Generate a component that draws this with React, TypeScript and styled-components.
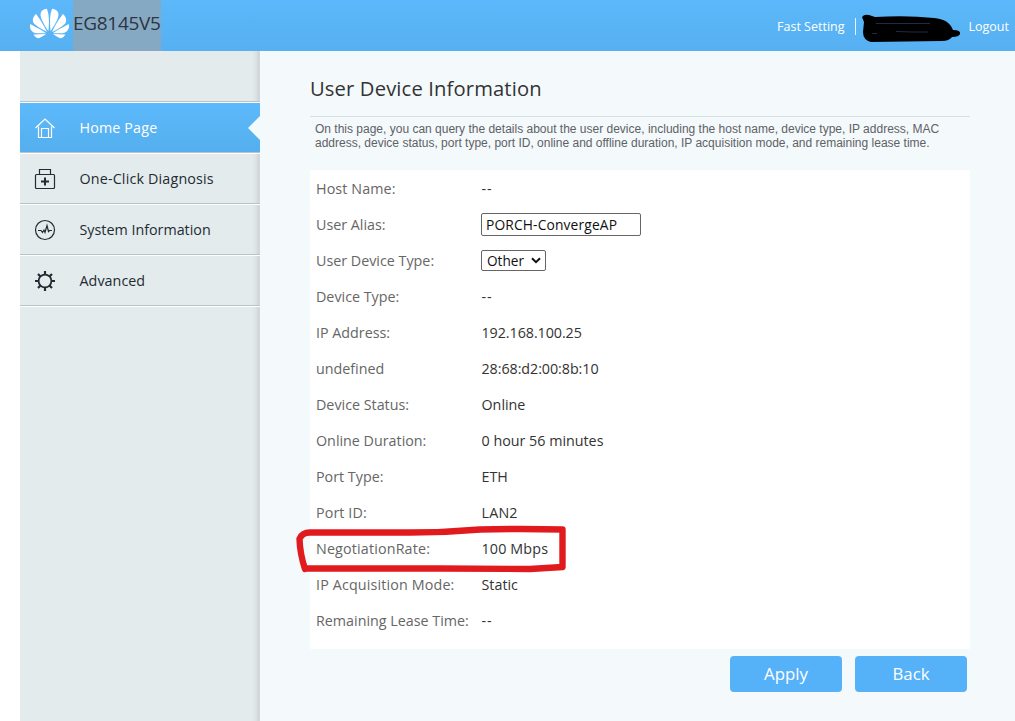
import React from "react";
import styled, { createGlobalStyle, css } from "styled-components";
import { SiHuawei } from "react-icons/si";

const Global = createGlobalStyle`
  * { box-sizing: border-box; }
  body {
    margin: 0;
    background: #fff;
    font-family: "Open Sans", "Noto Sans", sans-serif;
    font-size: 14.3px;
    color: #333;
    overflow: hidden;
  }
`;

const Page = styled.div`
  position: relative;
  display: flex;
  flex-direction: column;
  width: 1015px;
  height: 721px;
`;

const Header = styled.header`
  display: flex;
  justify-content: space-between;
  height: 51px;
  flex: none;
  padding: 0 6px 0 30px;
  background: linear-gradient(#5cb8fa, #56b0f1);
`;

const Brand = styled.div`
  display: flex;
  align-items: center;
  color: #fff;
`;

const Logo = styled(SiHuawei)`
  width: 39px;
  height: 39px;
  margin: 0 4px 4px 0;
`;

const Model = styled.span`
  width: 88px;
  height: 51px;
  line-height: 46px;
  font-size: 19px;
  letter-spacing: -0.3px;
  white-space: nowrap;
  color: #2d3540;
  background: #86a9c3;
`;

const TopLinks = styled.nav`
  display: flex;
  align-items: center;
  height: 53px;
  font-size: 12.5px;
  color: #fff;
`;

const TopLink = styled.a`
  white-space: nowrap;
`;

const Divider = styled.i`
  width: 1px;
  height: 17px;
  margin: 0 6px 0 10px;
  background: #e6f4fe;
`;

const Redaction = styled.svg`
  width: 99px;
  height: 29px;
  margin: 3px 8px 0 0;
`;

const Body = styled.div`
  display: flex;
  flex: 1;
  padding-left: 20px;
`;

const Sidebar = styled.aside`
  width: 240px;
  background: linear-gradient(90deg, #e4ebed 232px, #dce2e5 236px, #ced5d9 239px, #d6dde0 240px);
`;

const edge = css`
  border-bottom: 1px solid #b9c3c8;
  box-shadow: 0 1px 0 #fff;
  margin-bottom: 1px;
`;

const SidebarTop = styled.div`
  height: 51px;
  ${edge}
`;

const NavItem = styled.a<{ $active?: boolean }>`
  position: relative;
  display: flex;
  align-items: center;
  height: 50px;
  padding-left: 14px;
  gap: 23.5px;
  white-space: nowrap;
  color: ${(p) => (p.$active ? "#fff" : "#222b33")};
  background: ${(p) => (p.$active ? "linear-gradient(#5cb9fb, #55afee)" : "none")};
  ${edge}
`;

const NavIcon = styled.svg`
  width: 22px;
  height: 22px;
  fill: none;
  stroke: currentColor;
`;

const NavLabel = styled.span<{ $track: number }>`
  letter-spacing: ${(p) => p.$track}px;
`;

const Notch = styled.i`
  position: absolute;
  right: 0;
  top: 13px;
  border: 12px solid transparent;
  border-right-color: #f4f9fc;
  border-left: 0;
`;

const Main = styled.main`
  display: flex;
  flex-direction: column;
  flex: 1;
  padding: 0 45px 0 50px;
  background: #f4f9fc;
`;

const Title = styled.h1`
  height: 66px;
  margin: 0;
  padding-top: 11px;
  line-height: 53px;
  font-size: 20.2px;
  font-weight: 400;
  letter-spacing: 0.14px;
  border-bottom: 1px solid #d8dee1;
`;

const Intro = styled.p`
  height: 53px;
  margin: 0;
  padding: 5px 0 0 5px;
  font: 12px/14px "Liberation Sans", Arial, sans-serif;
  color: #5e6264;
  white-space: nowrap;
`;

const IntroLine = styled.span`
  display: block;
`;

const Panel = styled.dl`
  height: 479px;
  margin: 0;
  padding: 0 6px;
  background: #fff;
`;

const Row = styled.div`
  display: flex;
  align-items: center;
  height: 36px;
  white-space: nowrap;
`;

const Label = styled.dt<{ $track: number }>`
  width: 165.5px;
  letter-spacing: ${(p) => p.$track}px;
  color: #666;
`;

const Value = styled.dd<{ $track: number }>`
  display: flex;
  margin: 0;
  letter-spacing: ${(p) => p.$track}px;
`;

const AliasInput = styled.input`
  width: 160px;
  height: 23px;
  margin-left: -0.5px;
  padding: 0 4px;
  border: 1px solid #666;
  border-radius: 2px;
  font: 13.8px "Open Sans", sans-serif;
  letter-spacing: 0.14px;
  color: #111;
  background: #fff;
  outline: none;
`;

const TypeSelect = styled.button`
  display: flex;
  align-items: center;
  justify-content: space-between;
  width: 65px;
  height: 21px;
  margin-left: -0.5px;
  padding: 0 4px 0 5px;
  border: 1px solid #666;
  border-radius: 2px;
  font: 13.6px "Open Sans", sans-serif;
  color: #111;
  background: #fff;
`;

const Actions = styled.div`
  display: flex;
  justify-content: flex-end;
  gap: 13px;
  padding: 7px 3px 0 0;
`;

const ActionButton = styled.button`
  width: 112px;
  height: 36px;
  padding: 0 0 1px;
  border: 0;
  border-radius: 4px;
  font: 16.8px "Open Sans", sans-serif;
  color: #fff;
  background: #56b2f8;
`;

const Highlight = styled.svg`
  position: absolute;
  left: 290px;
  top: 520px;
  width: 285px;
  height: 60px;
  pointer-events: none;
`;

interface Entry {
  label: string;
  value: string;
  kind?: "input" | "select";
  labelTrack?: number;
  valueTrack?: number;
}

const rows: Entry[] = [
  { label: "Host Name:", value: "--", labelTrack: 0.1, valueTrack: 0.8 },
  { label: "User Alias:", value: "PORCH-ConvergeAP", kind: "input" },
  { label: "User Device Type:", value: "Other", kind: "select" },
  { label: "Device Type:", value: "--", valueTrack: 0.8 },
  { label: "IP Address:", value: "192.168.100.25", valueTrack: -0.06 },
  { label: "undefined", value: "28:68:d2:00:8b:10", valueTrack: -0.06 },
  { label: "Device Status:", value: "Online" },
  { label: "Online Duration:", value: "0 hour 56 minutes" },
  { label: "Port Type:", value: "ETH" },
  { label: "Port ID:", value: "LAN2", labelTrack: 0.1, valueTrack: 0.2 },
  { label: "NegotiationRate:", value: "100 Mbps", labelTrack: 0.16, valueTrack: 0.15 },
  { label: "IP Acquisition Mode:", value: "Static", labelTrack: 0.15 },
  { label: "Remaining Lease Time:", value: "--", valueTrack: 0.8 },
];

function Field({ value, kind }: Pick<Entry, "value" | "kind">) {
  if (kind === "input") return <AliasInput defaultValue={value} />;
  if (kind === "select")
    return (
      <TypeSelect>
        {value}
        <svg width="10" height="7" viewBox="0 0 10 7" fill="none" stroke="#111" strokeWidth="2">
          <path d="M1 1.2 5 5.2 9 1.2" />
        </svg>
      </TypeSelect>
    );
  return <>{value}</>;
}

export default function App() {
  return (
    <Page>
      <Global />
      <Header>
        <Brand>
          <Logo />
          <Model>EG8145V5</Model>
        </Brand>
        <TopLinks>
          <TopLink>Fast Setting</TopLink>
          <Divider />
          <Redaction viewBox="0 0 99 29">
            <path
              d="M0 3Q2 0 7 1L13 3Q45 1 72 4Q87 5 91 16Q99 16 98 20Q97 23 90 23Q87 27 80 27L9 28Q1 26 1 18L2 8Z"
              fill="#000"
            />
            <path d="M14 9.5H68M34 17.5 50 18H66M10 19.5H15" stroke="#34467a" strokeWidth="0.6" fill="none" />
          </Redaction>
          <TopLink>Logout</TopLink>
        </TopLinks>
      </Header>
      <Body>
        <Sidebar>
          <SidebarTop />
          <NavItem $active>
            <NavIcon viewBox="0 0 22 22" strokeWidth="1.2">
              <path d="M1.5 11 11 2 20.5 11M4.5 9.5V20.5H17.5V9.5M7.5 20V11.5H14.5V20" />
            </NavIcon>
            <NavLabel $track={0.15}>Home Page</NavLabel>
            <Notch />
          </NavItem>
          <NavItem>
            <NavIcon viewBox="0 0 22 22" strokeWidth="1.2">
              <rect x="1.5" y="6.5" width="19" height="14" rx="1" />
              <path d="M5.5 6V1.5H16.5V6" />
              <path d="M11 9.5V17.5M7 13.5H15" strokeWidth="2" />
            </NavIcon>
            <NavLabel $track={0.17}>One-Click Diagnosis</NavLabel>
          </NavItem>
          <NavItem>
            <NavIcon viewBox="0 0 22 22" strokeWidth="1.2">
              <circle cx="11" cy="11" r="9.5" />
              <path d="M4 11.5H7L8.500 13.5 10 11 11 13.5 13 6.5 14.5 12.5 15.5 11.5H18" />
            </NavIcon>
            <NavLabel $track={0}>System Information</NavLabel>
          </NavItem>
          <NavItem>
            <NavIcon viewBox="0 0 22 22" strokeWidth="1.8">
              <circle cx="11" cy="11" r="6.4" />
              <path
                d="M11 1V5M11 17V21M1 11H5M17 11H21M4 4 6.5 6.5M15.5 15.5 18 18M18 4 15.5 6.5M6.5 15.5 4 18"
                strokeWidth="2.2"
              />
            </NavIcon>
            <NavLabel $track={0.05}>Advanced</NavLabel>
          </NavItem>
        </Sidebar>
        <Main>
          <Title>User Device Information</Title>
          <Intro>
            <IntroLine>
              On this page, you can query the details about the user device, including the host name, device type, IP
              address, MAC
            </IntroLine>
            <IntroLine>
              address, device status, port type, port ID, online and offline duration, IP acquisition mode, and
              remaining lease time.
            </IntroLine>
          </Intro>
          <Panel>
            {rows.map((r) => (
              <Row key={r.label}>
                <Label $track={r.labelTrack ?? 0}>{r.label}</Label>
                <Value $track={r.valueTrack ?? 0}>
                  <Field value={r.value} kind={r.kind} />
                </Value>
              </Row>
            ))}
          </Panel>
          <Actions>
            <ActionButton>Apply</ActionButton>
            <ActionButton>Back</ActionButton>
          </Actions>
        </Main>
      </Body>
      <Highlight viewBox="0 0 285 60">
        <path
          d="M16 48.5H150L240 49 272.5 47V9.5Q230 8.5 190 9.5 150 13 110 12.5H20Q12 12.5 9.500 19 10 34 15 49"
          fill="none"
          stroke="#e11b1d"
          strokeWidth="6.4"
          strokeLinejoin="round"
          strokeLinecap="round"
        />
      </Highlight>
    </Page>
  );
}
